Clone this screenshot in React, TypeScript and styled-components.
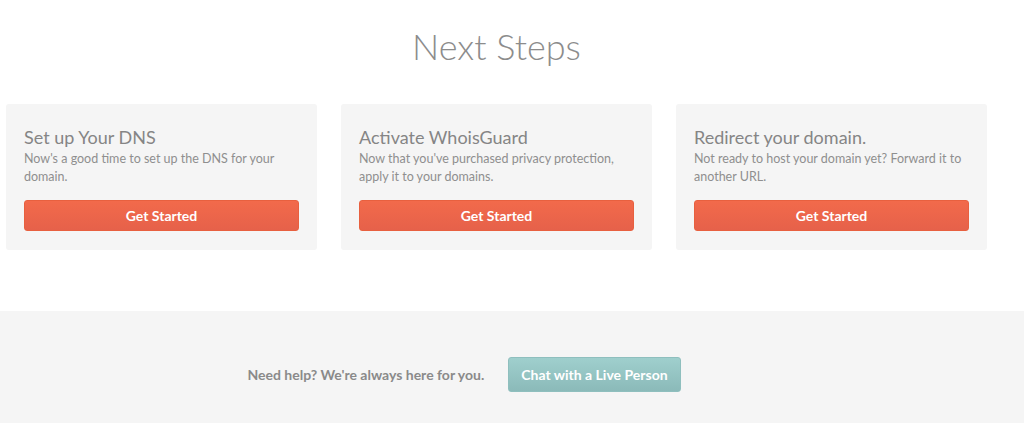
import styled, { createGlobalStyle } from "styled-components";

const steps = [
  {
    title: "Set up Your DNS",
    text: "Now's a good time to set up the DNS for your domain.",
  },
  {
    title: "Activate WhoisGuard",
    text: "Now that you've purchased privacy protection, apply it to your domains.",
  },
  {
    title: "Redirect your domain.",
    text: "Not ready to host your domain yet? Forward it to another URL.",
  },
];

const App = () => (
  <>
    <GlobalStyle />
    <Page>
      <Content>
        <Heading>Next Steps</Heading>
        <Cards>
          {steps.map((step) => (
            <Card key={step.title}>
              <CardTitle>{step.title}</CardTitle>
              <CardText>{step.text}</CardText>
              <StartButton>Get Started</StartButton>
            </Card>
          ))}
        </Cards>
      </Content>
      <HelpBar>
        <HelpInner>
          <HelpText>Need help? We're always here for you.</HelpText>
          <ChatButton>Chat with a Live Person</ChatButton>
        </HelpInner>
      </HelpBar>
    </Page>
  </>
);

export default App;

const GlobalStyle = createGlobalStyle`
  html, body {
    margin: 0;
    padding: 0;
    background: #fff;
  }
  body {
    font-family: Lato, "Open Sans", Arial, sans-serif;
    -webkit-font-smoothing: antialiased;
  }
  * {
    box-sizing: border-box;
  }
`;

const Page = styled.div`
  display: flex;
  flex-direction: column;
  min-height: 423px;
`;

const Content = styled.div`
  width: 987px;
  padding-left: 6px;
  padding-top: 22px;
  padding-bottom: 61px;
`;

const Heading = styled.h1`
  margin: 0 0 34px;
  text-align: center;
  font-size: 36px;
  line-height: 48px;
  font-weight: 300;
  color: #8c8c8c;
`;

const Cards = styled.div`
  display: grid;
  grid-template-columns: repeat(3, 311px);
  gap: 24px;
`;

const Card = styled.div`
  background: #f5f5f5;
  border-radius: 3px;
  padding: 21px 18px 18px;
  height: 146px;
`;

const CardTitle = styled.h2`
  margin: 0 0 1px;
  font-size: 18px;
  line-height: 24px;
  font-weight: 400;
  color: #858585;
`;

const CardText = styled.p`
  margin: 0 0 14px;
  font-size: 12.5px;
  line-height: 18px;
  color: #8f8f8f;
  min-height: 36px;
`;

const StartButton = styled.button`
  display: block;
  width: 100%;
  height: 31px;
  border: 1px solid #e8603f;
  border-radius: 3px;
  background: linear-gradient(#f26a4b, #e6614a);
  color: #fff;
  font-family: inherit;
  font-size: 14px;
  font-weight: 700;
  cursor: pointer;
`;

const HelpBar = styled.div`
  flex: 1;
  background: #f5f5f5;
  display: flex;
  align-items: center;
  justify-content: center;
  padding: 44px 96px 30px 0;
`;

const HelpInner = styled.div`
  display: flex;
  align-items: center;
  gap: 24px;
`;

const HelpText = styled.span`
  font-size: 14px;
  font-weight: 700;
  color: #8a8a8a;
`;

const ChatButton = styled.button`
  height: 35px;
  padding: 0 12px;
  border: 1px solid #8fbfbe;
  border-radius: 3px;
  background: linear-gradient(#9fcfcd, #8bbab9);
  color: #fff;
  font-family: inherit;
  font-size: 14px;
  font-weight: 700;
  cursor: pointer;
`;
